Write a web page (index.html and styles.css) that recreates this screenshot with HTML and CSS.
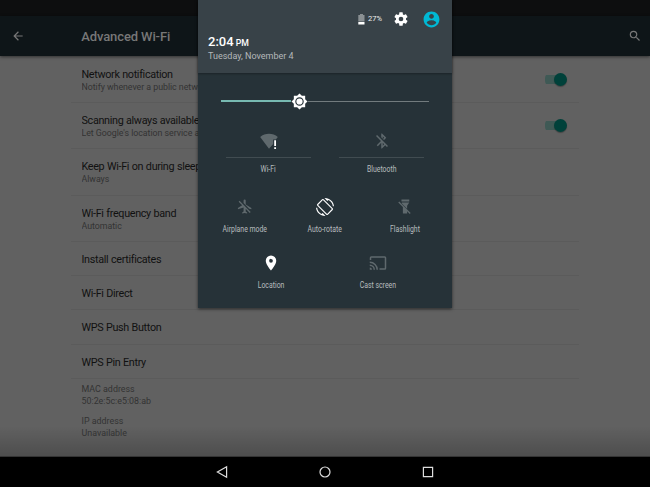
FILE: index.html
```html
<!DOCTYPE html>
<html lang="en">
<head>
<meta charset="utf-8">
<title>Advanced Wi-Fi</title>
<link rel="stylesheet" href="styles.css">
</head>
<body>
<div class="screen">
  <div class="status-bar"></div>
  <header class="app-bar">
    <svg class="back" viewBox="0 0 24 24"><path d="M20 11H7.830l5.590-5.590L12 4l-8 8 8 8 1.410-1.410L7.830 13H20v-2z"/></svg>
    <h1>Advanced Wi-Fi</h1>
    <svg class="search" viewBox="0 0 24 24"><path d="M15.500 14h-.79l-.28-.27A6.470 6.470 0 0 0 16 9.500 6.500 6.500 0 1 0 9.500 16c1.610 0 3.090-.59 4.230-1.570l.27.28v.79l5 4.990L20.490 19l-4.990-5zm-6 0C7.010 14 5 11.990 5 9.500S7.010 5 9.500 5 14 7.010 14 9.500 11.990 14 9.500 14z"/></svg>
  </header>
  <main class="content">
    <div class="list">
      <div class="row first"><div class="copy"><b>Network notification</b><small>Notify whenever a public network is available</small></div><i class="switch"></i></div>
      <div class="row tall"><div class="copy"><b>Scanning always available</b><small>Let Google's location service and other apps scan for networks</small></div><i class="switch"></i></div>
      <div class="row tall extra"><div class="copy"><b>Keep Wi-Fi on during sleep</b><small>Always</small></div></div>
      <div class="row tall"><div class="copy"><b>Wi-Fi frequency band</b><small>Automatic</small></div></div>
      <div class="row"><b>Install certificates</b></div>
      <div class="row"><b>Wi-Fi Direct</b></div>
      <div class="row extra-short"><b>WPS Push Button</b></div>
      <div class="row"><b>WPS Pin Entry</b></div>
      <div class="info">MAC address<br>50:2e:5c:e5:08:ab</div>
      <div class="info">IP address<br>Unavailable</div>
    </div>
  </main>
  <nav class="nav">
    <svg viewBox="0 0 14 14"><path d="M11.600 1.800v10.400L2.400 7z"/></svg>
    <svg viewBox="0 0 14 14"><circle cx="7" cy="7" r="5"/></svg>
    <svg viewBox="0 0 14 14"><path d="M2.400 2.400h9.200v9.200H2.400z"/></svg>
  </nav>

  <section class="shade">
    <div class="shade-head">
      <div class="tools">
        <svg class="battery" viewBox="0 0 7 11"><path class="dim" d="M2 0h3v1h1.500v6.500H.3V1H2z"/><path d="M.3 8h6.200v2.500H.3z"/></svg>
        <span class="percent">27%</span>
        <svg class="gear" viewBox="0 0 24 24"><path d="M19.430 12.980c.04-.32.07-.64.07-.98s-.03-.66-.07-.98l2.110-1.650c.19-.15.24-.42.12-.64l-2-3.460c-.12-.22-.39-.3-.61-.22l-2.490 1c-.52-.4-1.080-.73-1.690-.98l-.38-2.650A.49.49 0 0 0 14 2h-4c-.25 0-.46.18-.49.42l-.38 2.650c-.61.25-1.170.59-1.690.98l-2.490-1c-.23-.09-.49 0-.61.22l-2 3.460c-.13.22-.07.49.12.64l2.110 1.650c-.04.32-.07.65-.07.98s.03.66.07.98l-2.110 1.650c-.19.15-.24.42-.12.64l2 3.460c.12.22.39.3.61.22l2.490-1c.52.4 1.080.73 1.690.98l.38 2.650c.03.24.24.42.49.42h4c.25 0 .46-.18.49-.42l.38-2.650c.61-.25 1.170-.59 1.690-.98l2.490 1c.23.09.49 0 .61-.22l2-3.460c.12-.22.07-.49-.12-.64l-2.110-1.650zM12 15.500A3.500 3.500 0 1 1 12 8.500a3.500 3.500 0 0 1 0 7z"/></svg>
        <svg class="user" viewBox="0 0 24 24"><path d="M12 2C6.480 2 2 6.480 2 12s4.480 10 10 10 10-4.480 10-10S17.520 2 12 2zm0 3c1.660 0 3 1.340 3 3s-1.340 3-3 3-3-1.340-3-3 1.340-3 3-3zm0 14.200c-2.500 0-4.710-1.280-6-3.220.03-1.990 4-3.080 6-3.080 1.990 0 5.970 1.090 6 3.080-1.290 1.940-3.500 3.220-6 3.220z"/></svg>
      </div>
      <div class="clock">2:04 <span>PM</span></div>
      <div class="date">Tuesday, November 4</div>
    </div>
    <div class="brightness">
      <div class="filled"></div>
      <svg viewBox="0 0 24 24"><path d="M20 8.690V4h-4.690L12 .69 8.690 4H4v4.690L.69 12 4 15.310V20h4.690L12 23.310 15.310 20H20v-4.690L23.310 12z"/><circle class="ring" cx="12" cy="12" r="5.200"/></svg>
      <div class="rest"></div>
    </div>
    <div class="tiles primary">
      <div class="tile"><svg viewBox="0 0 20 20"><path d="M.2 5.500C5.500 .8 14.500 .8 19.800 5.500L17.600 8.200H14.600V13.200L10 18.500z"/><path class="on" d="M15.800 9.300h2v6.200h-2zM15.800 17h2v2h-2z"/></svg><hr><span>Wi-Fi</span></div>
      <div class="tile"><svg class="bt" viewBox="0 0 24 24"><path d="M13 5.830l1.880 1.880-1.600 1.600 1.410 1.410 3.020-3.020L12 2h-1v5.030l2 2v-3.200zM5.410 4L4 5.410 10.590 12 5 17.590 6.410 19 11 14.410V22h1l4.290-4.290 2.300 2.290L20 18.590 5.410 4zM13 18.170v-3.760l1.880 1.880L13 18.170z"/></svg><hr><span>Bluetooth</span></div>
    </div>
    <div class="tiles secondary">
      <div class="tile"><svg viewBox="0 0 24 24"><path d="M13 9V3.500a1.500 1.500 0 0 0-3 0v3.680l7.830 7.830L21 16v-2l-8-5zM3 5.270l4.990 4.990L2 14v2l8-2.500V19l-2 1.500V22l3.500-1 3.500 1v-1.500L13 19v-3.730L18.730 21 20 19.730 4.270 4 3 5.270z"/></svg><span>Airplane mode</span></div>
      <div class="tile"><svg class="rotate on" viewBox="0 0 24 24"><path d="M16.480 2.520c3.270 1.550 5.610 4.720 5.970 8.480h1.500C23.440 4.840 18.290 0 12 0l-.66.03 3.810 3.810 1.330-1.320zm-6.250-.77a1.490 1.490 0 0 0-2.120 0L1.750 8.110a1.490 1.490 0 0 0 0 2.120l12.020 12.020a1.490 1.490 0 0 0 2.120 0l6.360-6.360a1.490 1.490 0 0 0 0-2.120L10.230 1.750zm4.600 19.440L2.810 9.170l6.360-6.360 12.020 12.020-6.360 6.360zm-7.310.29C4.250 19.940 1.910 16.760 1.550 13H.05C.56 19.160 5.710 24 12 24l.66-.03-3.810-3.810-1.330 1.320z"/></svg><span>Auto-rotate</span></div>
      <div class="tile"><svg viewBox="0 0 24 24"><path d="M7 2h11v3H7zM7.500 6.500H18L15 11v4.200L7.500 7.700zM3.800 5L20 21.200l-1.300 1.300-3.700-3.700V22H9v-9.200L2.500 6.300z"/></svg><span>Flashlight</span></div>
    </div>
    <div class="tiles tertiary">
      <div class="tile"><svg class="on" viewBox="0 0 24 24"><path d="M12 2a7 7 0 0 0-7 7c0 5.250 7 13 7 13s7-7.750 7-13a7 7 0 0 0-7-7zm0 9.500a2.500 2.500 0 1 1 0-5 2.500 2.500 0 0 1 0 5z"/></svg><span>Location</span></div>
      <div class="tile"><svg viewBox="0 0 24 24"><path d="M21 3H3a2 2 0 0 0-2 2v3h2V5h18v14h-7v2h7a2 2 0 0 0 2-2V5a2 2 0 0 0-2-2zM1 18v3h3a3 3 0 0 0-3-3zm0-4v2a5 5 0 0 1 5 5h2a7 7 0 0 0-7-7zm0-4v2a9 9 0 0 1 9 9h2A11 11 0 0 0 1 10z"/></svg><span>Cast screen</span></div>
    </div>
  </section>
</div>
</body>
</html>
```
FILE: styles.css
```css
* { box-sizing: border-box; }
body { margin: 0; background: #000; font-family: Roboto, "Liberation Sans", sans-serif; }
svg { display: block; flex: none; }
.screen { position: relative; width: 650px; height: 487px; overflow: hidden; display: flex; flex-direction: column; }

.status-bar { height: 16px; background: #0d0e0f; }
.app-bar { height: 40px; background: #0e1518; display: flex; align-items: center; padding: 0 8px 0 11px; z-index: 1; box-shadow: 0 1px 3px rgba(0, 0, 0, .5); }
.app-bar svg { width: 14px; height: 14px; fill: #777; }
.app-bar h1 { flex: 1; margin: 1px 0 0 56.300px; font-size: 13px; line-height: 16px; font-weight: 500; letter-spacing: -.12px; color: #777; }

.content { height: 401px; background: linear-gradient(transparent 370px, rgba(0, 0, 0, .2)) #616161; border-bottom: 1px solid #343434; }
.list { margin-left: 71px; width: 508px; }
.row { height: 34px; padding: 1px 12px 0 10.500px; border-bottom: 1px solid #5b5b5b; display: flex; align-items: center; justify-content: space-between; white-space: nowrap; }
.row b { display: block; font-size: 10.800px; line-height: 13px; font-weight: 400; letter-spacing: -.33px; word-spacing: .3px; color: #111; }
.row small { display: block; font-size: 8.800px; line-height: 12px; letter-spacing: -.03px; color: #333; }
.row.tall { height: 46px; }
.row.first { height: 47px; }
.row.tall.extra { height: 47px; padding-top: 0; }
.row.extra-short { height: 35px; }
.copy { width: 420px; overflow: hidden; padding-top: 1px; }
.row.extra .copy { padding-top: 0; }
.switch { width: 22px; height: 13px; margin-top: -1px; display: flex; align-items: center; justify-content: flex-end; background: linear-gradient(#3f5955, #3f5955) 0 50% / 18px 9px no-repeat; border-radius: 5px; }
.switch::after { content: ""; width: 13px; height: 13px; border-radius: 50%; background: #00413a; box-shadow: 0 1px 1px rgba(0, 0, 0, .3); }
.info { padding: 4px 0 0 10.500px; height: 32px; font-size: 8.900px; line-height: 12px; color: #333; }

.nav { height: 30px; background: #000; display: flex; justify-content: center; align-items: center; gap: 89px; }
.nav svg { width: 14px; height: 14px; fill: none; stroke: #ddd; stroke-width: 1.200; }

.shade { position: absolute; z-index: 2; left: 198px; top: 0; width: 254px; height: 308px; background: #263238; box-shadow: 0 1px 3px rgba(0, 0, 0, .6); }
.shade-head { height: 73px; padding: 10px 12px 0 10px; background: #384248; box-shadow: 0 1px 2px rgba(0, 0, 0, .3); }
.tools { height: 18px; margin-right: -1px; display: flex; justify-content: flex-end; align-items: center; fill: #fff; }
.battery { width: 7px; height: 11px; margin-right: 3px; }
.battery .dim { fill: #8a9093; }
.percent { font-size: 7.500px; line-height: 10px; color: #eee; width: 15px; margin-right: 10px; }
.gear { width: 16px; height: 16px; margin-right: 13px; }
.user { width: 19px; height: 19px; fill: #00b8d4; }
.clock { margin-top: 5px; padding-top: .5px; font-size: 13px; line-height: 16px; font-weight: 500; color: #fff; }
.clock span { font-size: 8.700px; margin-left: -1px; }
.date { font-size: 9px; line-height: 12px; color: #b4b8ba; margin-top: -1px; }

.brightness { height: 20px; margin: 18px 23px 0; display: flex; align-items: center; }
.brightness .filled { width: 69.500px; height: 2px; background: #77b9b1; }
.brightness svg { width: 17px; height: 17px; fill: #fff; }
.brightness .ring { fill: none; stroke: #263238; stroke-width: 1.600; }
.brightness .rest { flex: 1; height: 1px; background: #727b7e; }

.tiles { display: flex; justify-content: center; fill: #5f696d; }
.tile { display: flex; flex-direction: column; align-items: center; width: 80px; }
.tile svg { width: 18px; height: 17px; }
.tile .on, svg.on { fill: #fff; }
.tile span { font-size: 8.300px; line-height: 10px; color: #b8bdbf; white-space: nowrap; transform: scaleX(.83); }
.tile hr { width: 85px; height: 1px; border: 0; margin: 7px 0 6px; background: #414c51; }
.primary { margin-top: 21.500px; }
.primary .tile { width: 113px; }
.primary .tile svg { width: 20px; height: 18px; margin-top: -1px; }
.secondary { margin-top: 24.500px; margin-left: -1px; }
.secondary .tile svg { margin-bottom: 9px; }
.secondary .tile .rotate { width: 18px; height: 18px; margin-bottom: 8px; }
.tertiary { margin-top: 19.500px; margin-left: -1px; }
.tertiary .tile { width: 107px; }
.tertiary .tile svg { width: 18px; height: 18px; margin-bottom: 8px; }
```
